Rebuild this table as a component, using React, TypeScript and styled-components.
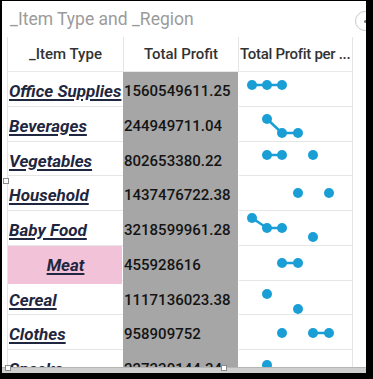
import React from 'react';
import styled, { createGlobalStyle } from 'styled-components';

type Item = {
  name: string;
  profit: string;
  points: (number | null)[];
  selected?: boolean;
};

const items: Item[] = [
  { name: 'Office Supplies', profit: '1560549611.25', points: [13, 13, 13, null, null, null] },
  { name: 'Beverages', profit: '244949711.04', points: [null, 12, 26, 26, null, null] },
  { name: 'Vegetables', profit: '802653380.22', points: [null, 13, 13, null, 13, null] },
  { name: 'Household', profit: '1437476722.38', points: [null, null, null, 17, null, 17] },
  { name: 'Baby Food', profit: '3218599961.28', points: [7, 17, 17, null, 26, null] },
  { name: 'Meat', profit: '455928616', points: [null, null, 17, 17, null, null], selected: true },
  { name: 'Cereal', profit: '1117136023.38', points: [null, 13, null, 28, null, null] },
  { name: 'Clothes', profit: '958909752', points: [null, null, 18, null, 18, 18] },
  { name: 'Snacks', profit: '227330144.34', points: [null, 15, null, null, null, null] },
];

const DOT_X = [13, 28, 43, 59, 74, 90];
const DOT_COLOR = '#199fd5';

const GlobalStyle = createGlobalStyle`
  html, body {
    margin: 0;
    background: #000;
  }
  body {
    font-family: Roboto, 'Liberation Sans', sans-serif;
  }
`;

const Page = styled.div`
  width: 373px;
  height: 379px;
  padding: 1px 7px 6px 2px;
  box-sizing: border-box;
  background: #000;
`;

const Frame = styled.div`
  position: relative;
  width: 364px;
  height: 372px;
  background: #fff;
  display: flex;
  flex-direction: column;
  overflow: hidden;
`;

const Title = styled.div`
  height: 36px;
  padding-left: 8px;
  display: flex;
  align-items: center;
  font-size: 17.5px;
  color: #9b9b9b;
  flex-shrink: 0;
`;

const TableArea = styled.div`
  flex: 1;
  min-height: 0;
  overflow: hidden;
  padding-left: 5px;
`;

const Table = styled.div`
  width: 346px;
  border-left: 1px solid #e4e4e4;
  border-right: 1px solid #e4e4e4;
  box-sizing: border-box;
`;

const Grid = styled.div`
  display: grid;
  grid-template-columns: 115px 115px 114px;
`;

const HeaderRow = styled(Grid)`
  height: 35px;
  border-bottom: 1px solid #e8e8e8;
  box-sizing: border-box;
`;

const HeaderCell = styled.div<{ $align?: 'left' | 'center' }>`
  display: flex;
  align-items: center;
  justify-content: ${({ $align }) => ($align === 'left' ? 'flex-start' : 'center')};
  padding-left: ${({ $align }) => ($align === 'left' ? '1px' : '0')};
  letter-spacing: ${({ $align }) => ($align === 'left' ? '-0.3px' : '0')};
  font-size: 15px;
  font-weight: 500;
  color: #333;
  white-space: nowrap;
  & + & {
    border-left: 1px solid #e4e4e4;
  }
`;

const Row = styled(Grid)`
  height: 34.75px;
  border-bottom: 1px solid #e6e6e6;
  box-sizing: border-box;
`;

const NameCell = styled.div<{ $selected?: boolean }>`
  display: flex;
  align-items: center;
  justify-content: ${({ $selected }) => ($selected ? 'center' : 'flex-start')};
  padding-left: 1px;
  background: ${({ $selected }) => ($selected ? '#f2c3d8' : 'transparent')};
  margin-right: 1px;
  overflow: hidden;
`;

const NameLink = styled.a`
  font-size: 17px;
  font-weight: 700;
  font-style: italic;
  color: #1f2740;
  text-decoration: underline;
  text-decoration-thickness: 1.5px;
  text-underline-offset: 2px;
  white-space: nowrap;
  cursor: pointer;
`;

const ProfitCell = styled.div`
  display: flex;
  align-items: center;
  padding-left: 1px;
  background: #a6a6a6;
  font-size: 15px;
  font-weight: 500;
  color: #141414;
  white-space: nowrap;
  overflow: hidden;
`;

const SparkCell = styled.div`
  position: relative;
  border-left: 1px solid #fff;
`;

const ContextButton = styled.div`
  position: absolute;
  right: -9px;
  top: 10px;
  width: 18px;
  height: 18px;
  border: 1px solid #c9c9c9;
  border-radius: 50%;
  background: #fff;
  display: flex;
  align-items: center;
  justify-content: center;
  &::after {
    content: '';
    width: 3px;
    height: 3px;
    border-radius: 50%;
    background: #777;
  }
`;

const ScrollBar = styled.div`
  height: 5px;
  flex-shrink: 0;
  background: #cfcfcf;
  border-top: 1px solid #b5b5b5;
`;

const Handle = styled.div<{ $x: number; $y: number }>`
  position: absolute;
  left: ${({ $x }) => $x}px;
  top: ${({ $y }) => $y}px;
  width: 4px;
  height: 4px;
  border: 1px solid #8a8a8a;
  background: #fff;
`;

function Sparkline({ points }: { points: (number | null)[] }) {
  const segments: React.ReactNode[] = [];
  points.forEach((y, i) => {
    const next = points[i + 1];
    if (y !== null && next !== null && next !== undefined) {
      segments.push(
        <line
          key={`l${i}`}
          x1={DOT_X[i]}
          y1={y}
          x2={DOT_X[i + 1]}
          y2={next}
          stroke={DOT_COLOR}
          strokeWidth={2.5}
        />
      );
    }
  });
  return (
    <svg width="114" height="34" viewBox="0 0 114 34">
      {segments}
      {points.map((y, i) =>
        y === null ? null : <circle key={`c${i}`} cx={DOT_X[i]} cy={y} r={5} fill={DOT_COLOR} />
      )}
    </svg>
  );
}

export default function App() {
  return (
    <Page>
      <GlobalStyle />
      <Frame>
        <Title>_Item Type and _Region</Title>
        <TableArea>
          <Table>
            <HeaderRow>
              <HeaderCell>_Item Type</HeaderCell>
              <HeaderCell>Total Profit</HeaderCell>
              <HeaderCell $align="left">Total Profit per ...</HeaderCell>
            </HeaderRow>
            {items.map((item) => (
              <Row key={item.name}>
                <NameCell $selected={item.selected}>
                  <NameLink>{item.name}</NameLink>
                </NameCell>
                <ProfitCell>{item.profit}</ProfitCell>
                <SparkCell>
                  <Sparkline points={item.points} />
                </SparkCell>
              </Row>
            ))}
          </Table>
        </TableArea>
        <ScrollBar />
        <ContextButton />
        <Handle $x={1} $y={177} />
        <Handle $x={3} $y={364} />
        <Handle $x={219} $y={364} />
      </Frame>
    </Page>
  );
}
